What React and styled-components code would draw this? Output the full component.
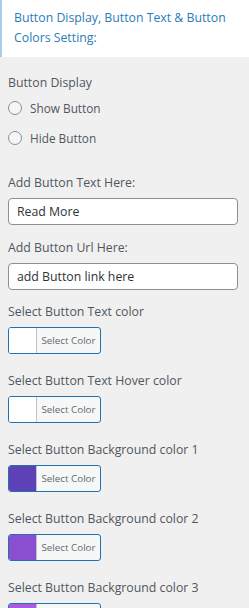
import React from "react"
import styled, { createGlobalStyle } from "styled-components"

const Global = createGlobalStyle`
  html, body {
    margin: 0;
    padding: 0;
    background: #f0f0f0;
  }
  body {
    font-family: "Open Sans", "Noto Sans", sans-serif;
    color: #50575e;
  }
`

const Page = styled.div`
  width: 249px;
  background: #f0f0f0;
`

const Header = styled.div`
  background: #fff;
  border-left: 2px solid #a9d0e8;
  padding: 8px 8px 9px 12px;
  height: 40px;
`

const Title = styled.h2`
  margin: 0;
  font-size: 12.3px;
  line-height: 20px;
  font-weight: 400;
  color: #2b7cb7;
`

const Body = styled.div`
  display: flex;
  flex-direction: column;
  padding: 17px 12px 0 8px;
`

const Label = styled.div`
  font-size: 12.3px;
  line-height: 18px;
  color: #50575e;
  margin-bottom: ${p => p.gap || 5}px;
`

const Group = styled.div`
  display: flex;
  flex-direction: column;
  margin-bottom: ${p => p.space || 18}px;
`

const Radios = styled.div`
  display: flex;
  flex-direction: column;
  gap: 10px;
`

const RadioRow = styled.label`
  display: flex;
  align-items: center;
  gap: 8px;
  height: 20px;
  font-size: 11.8px;
  color: #50575e;
`

const Radio = styled.span`
  width: 14px;
  height: 14px;
  border-radius: 50%;
  border: 1px solid #8c8f94;
  background: #f6f6f6;
  box-sizing: border-box;
  flex: none;
`

const TextInput = styled.div`
  box-sizing: border-box;
  width: 230px;
  height: 27px;
  border: 1px solid #8c8f94;
  border-radius: 4px;
  background: #fff;
  padding: 0 8px;
  display: flex;
  align-items: center;
  font-size: 12.3px;
  color: #2c3338;
`

const ColorButton = styled.div`
  box-sizing: border-box;
  width: 93px;
  height: 27px;
  border: 1px solid #2271b1;
  border-radius: 3px;
  background: #f6f7f7;
  display: flex;
  overflow: hidden;
`

const Swatch = styled.span`
  width: 27px;
  flex: none;
  background: ${p => p.color};
  border-right: 1px solid #c3c4c7;
`

const ColorText = styled.span`
  flex: 1;
  display: flex;
  align-items: center;
  justify-content: center;
  font-size: 9.8px;
  color: #646970;
`

const colorFields = [
  { label: "Select Button Text color", color: "#ffffff" },
  { label: "Select Button Text Hover color", color: "#ffffff" },
  { label: "Select Button Background color 1", color: "#5e40b7" },
  { label: "Select Button Background color 2", color: "#8a4fd0" },
  { label: "Select Button Background color 3", color: "#a95be2" },
]

export default function App() {
  return (
    <Page>
      <Global />
      <Header>
        <Title>Button Display, Button Text &amp; Button Colors Setting:</Title>
      </Header>
      <Body>
        <Group space={26}>
          <Label gap={6}>Button Display</Label>
          <Radios>
            <RadioRow><Radio />Show Button</RadioRow>
            <RadioRow><Radio />Hide Button</RadioRow>
          </Radios>
        </Group>
        <Group space={14}>
          <Label gap={6}>Add Button Text Here:</Label>
          <TextInput>Read More</TextInput>
        </Group>
        <Group space={13}>
          <Label gap={6}>Add Button Url Here:</Label>
          <TextInput>add Button link here</TextInput>
        </Group>
        {colorFields.map(f => (
          <Group key={f.label}>
            <Label gap={6}>{f.label}</Label>
            <ColorButton>
              <Swatch color={f.color} />
              <ColorText>Select Color</ColorText>
            </ColorButton>
          </Group>
        ))}
      </Body>
    </Page>
  )
}
